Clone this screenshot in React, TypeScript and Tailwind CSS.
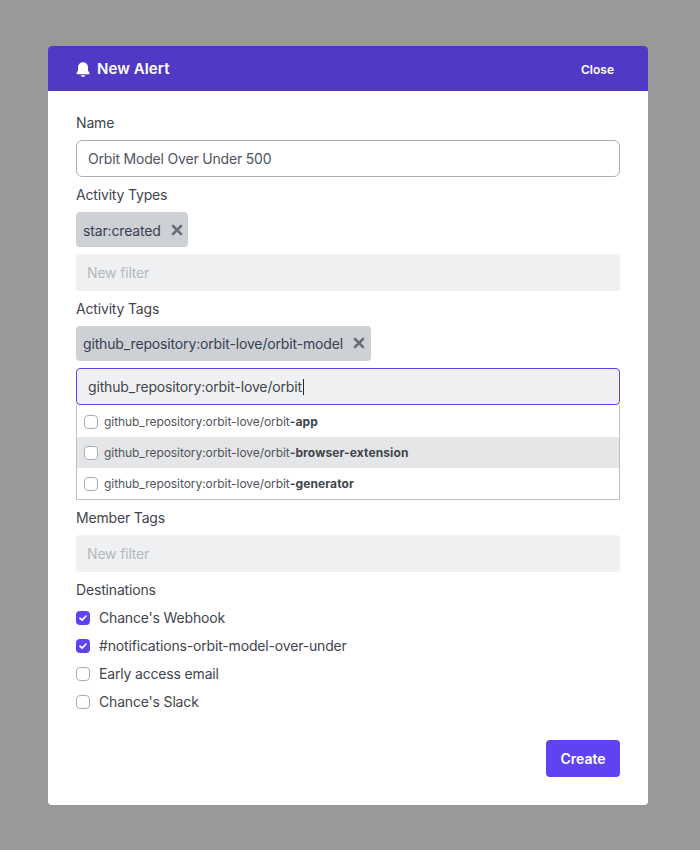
import React from "react";

const font = "font-['Inter',sans-serif]";

const Label = ({ children }: { children: React.ReactNode }) => (
  <div className="h-5 mt-2 mb-[7px] text-sm leading-5 tracking-[-0.17px] text-[#41454d]">{children}</div>
);

const Chip = ({ text, low }: { text: string; low?: boolean }) => (
  <div className="flex h-[35px] w-fit items-center rounded bg-[#cdd0d5] pl-[7px] pr-[5.5px] text-sm tracking-[-0.15px] text-[#374151]">
    <span className={low ? "translate-y-px" : ""}>{text}</span>
    <svg className={`ml-[10px] h-[12px] w-[12px] ${low ? "" : "-translate-y-px"}`} viewBox="0 0 12 12" fill="none">
      <path d="M2 2l8 8M10 2l-8 8" stroke="#6b7078" strokeWidth="2.6" strokeLinecap="round" />
    </svg>
  </div>
);

const EmptyFilter = () => (
  <div className="mt-[7px] flex h-[37px] items-center rounded bg-[#eff0f2] px-[11px] text-sm tracking-[-0.17px] text-[#b5b8bd]">
    New filter
  </div>
);

const options = [
  { bold: "-app", active: false },
  { bold: "-browser-extension", active: true },
  { bold: "-generator", active: false },
];

const destinations = [
  { name: "Chance's Webhook", checked: true },
  { name: "#notifications-orbit-model-over-under", checked: true },
  { name: "Early access email", checked: false },
  { name: "Chance's Slack", checked: false },
];

const Checkbox = ({ checked }: { checked: boolean }) =>
  checked ? (
    <span className="flex h-[14px] w-[14px] items-center justify-center rounded-[4px] bg-[#5f43f2]">
      <svg className="h-[10px] w-[10px]" viewBox="0 0 10 10" fill="none">
        <path d="M2 5.2l2.1 2L8 3" stroke="#fff" strokeWidth="1.7" strokeLinecap="round" strokeLinejoin="round" />
      </svg>
    </span>
  ) : (
    <span className="h-[14px] w-[14px] rounded-[4px] border border-[#a9afb9] bg-white" />
  );

export default function App() {
  return (
    <div className={`${font} h-[850px] w-[700px] bg-[#999999] px-12 pt-[46px]`}>
      <div className="h-[759px] w-[600px] overflow-hidden rounded bg-white">
        {/* Header */}
        <div className="flex h-[45px] items-center justify-between bg-[#4f39c5] pl-7 pr-[34px] pt-[2px] text-white">
          <div className="flex items-center">
            <svg className="h-[15px] w-[14px]" viewBox="2 1 16 18" fill="#fff">
              <path d="M10 1.2a6 6 0 0 0-6 6v3.9l-1.7 3.2A1 1 0 0 0 3.2 15.8h13.6a1 1 0 0 0 .9-1.5L16 11.1V7.2a6 6 0 0 0-6-6z" />
              <path d="M7.2 17a3 3 0 0 0 5.6 0z" />
            </svg>
            <span className="ml-[7px] text-[15px] font-semibold tracking-[0.1px]">New Alert</span>
          </div>
          <span className="text-xs font-semibold">Close</span>
        </div>

        <div className="px-7 pt-[14px]">
          <Label>Name</Label>
          <div className="flex h-[37px] items-center rounded-md border border-[#a9afb9] px-[11px] text-sm tracking-[-0.19px] text-[#50545c]">
            Orbit Model Over Under 500
          </div>

          <Label>Activity Types</Label>
          <Chip text="star:created" low />
          <EmptyFilter />

          <Label>Activity Tags</Label>
          <Chip text="github_repository:orbit-love/orbit-model" />
          <div className="mt-[7px] flex h-[37px] items-center rounded border border-[#5f43f2] bg-[#eff0f2] px-[11px] text-sm tracking-[-0.15px] text-[#41454d]">
            github_repository:orbit-love/orbit
            <span className="ml-px h-4 w-px bg-[#1f2937]" />
          </div>
          <div className="h-[95px] border border-t-0 border-[#bdbfc4] pt-px text-xs text-[#50545c]">
            {options.map((o) => (
              <div key={o.bold} className={`flex h-[31px] items-center pl-[7px] ${o.active ? "bg-[#e5e6e8]" : ""}`}>
                <Checkbox checked={false} />
                <span className="ml-[6px] tracking-[-0.06px]">
                  github_repository:orbit-love/orbit
                  <b className="font-bold tracking-[0.11px] text-[#41454d]">{o.bold}</b>
                </span>
              </div>
            ))}
          </div>

          <Label>Member Tags</Label>
          <EmptyFilter />

          <Label>Destinations</Label>
          <div className="-mt-[3px] flex flex-col">
            {destinations.map((d) => (
              <div key={d.name} className="flex h-7 items-center text-sm tracking-[-0.17px] text-[#41454d]">
                <Checkbox checked={d.checked} />
                <span className="ml-[9px]">{d.name}</span>
              </div>
            ))}
          </div>

          <div className="mt-6 flex justify-end">
            <div className="flex h-[37px] w-[74px] items-center justify-center rounded bg-[#5f43f2] text-sm font-semibold text-white">
              Create
            </div>
          </div>
        </div>
      </div>
    </div>
  );
}
